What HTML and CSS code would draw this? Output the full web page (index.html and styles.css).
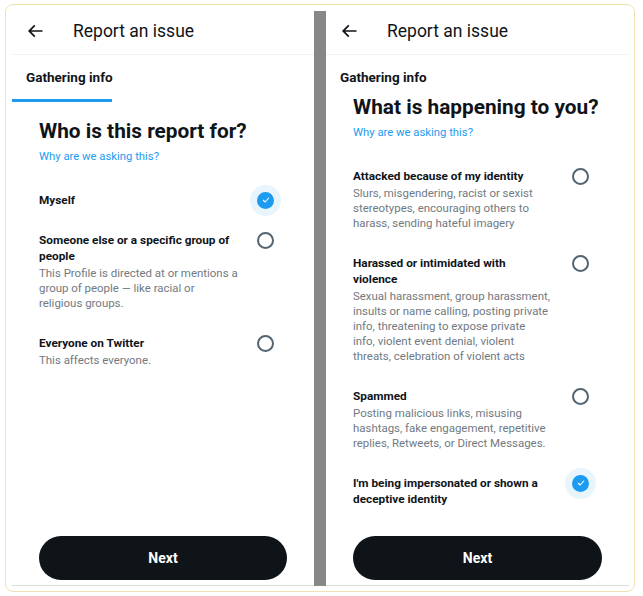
FILE: index.html
```html
<!DOCTYPE html>
<html lang="en">
<head>
  <meta charset="UTF-8" />
  <meta name="viewport" content="width=device-width, initial-scale=1.0" />
  <title>Report an issue</title>
  <link rel="stylesheet" href="styles.css">
</head>
<body>
  <div class="frame">
    <div class="screen">

      <!-- step 1: who is it for -->
      <section class="panel">
        <header class="topbar">
          <svg class="back" viewBox="0 0 24 24"><path d="M7.414 13l5.043 5.04-1.414 1.42L3.586 12l7.457-7.46 1.414 1.42L7.414 11H21v2H7.414z"/></svg>
          <span class="topbar-title">Report an issue</span>
        </header>
        <div class="tab tab-active">Gathering info</div>

        <div class="content">
          <h1 class="heading">Who is this report for?</h1>
          <a class="why" href="#">Why are we asking this?</a>

          <ul class="options">
            <li class="option">
              <div class="option-text">
                <div class="option-title">Myself</div>
              </div>
              <span class="mark"><span class="check"><svg viewBox="0 0 24 24"><path d="M6.5 12.5l3.7 3.5 7.3-8"/></svg></span></span>
            </li>
            <li class="option">
              <div class="option-text">
                <div class="option-title">Someone else or a specific group of people</div>
                <div class="option-desc">This Profile is directed at or mentions a group of people — like racial or religious groups.</div>
              </div>
              <span class="mark"><span class="radio"></span></span>
            </li>
            <li class="option">
              <div class="option-text">
                <div class="option-title">Everyone on Twitter</div>
                <div class="option-desc">This affects everyone.</div>
              </div>
              <span class="mark"><span class="radio"></span></span>
            </li>
          </ul>
        </div>

        <div class="footer">
          <button class="next">Next</button>
        </div>
      </section>

      <div class="divider"></div>

      <!-- step 2: what is happening -->
      <section class="panel panel-right">
        <header class="topbar">
          <svg class="back" viewBox="0 0 24 24"><path d="M7.414 13l5.043 5.04-1.414 1.42L3.586 12l7.457-7.46 1.414 1.42L7.414 11H21v2H7.414z"/></svg>
          <span class="topbar-title">Report an issue</span>
        </header>
        <div class="tab">Gathering info</div>

        <div class="content">
          <h1 class="heading heading-tight">What is happening to you?</h1>
          <a class="why" href="#">Why are we asking this?</a>

          <ul class="options">
            <li class="option">
              <div class="option-text">
                <div class="option-title">Attacked because of my identity</div>
                <div class="option-desc">Slurs, misgendering, racist or sexist stereotypes, encouraging others to harass, sending hateful imagery</div>
              </div>
              <span class="mark"><span class="radio"></span></span>
            </li>
            <li class="option">
              <div class="option-text">
                <div class="option-title">Harassed or intimidated with<br>violence</div>
                <div class="option-desc">Sexual harassment, group harassment, insults or name calling, posting private info, threatening to expose private<br>info, violent event denial, violent<br>threats, celebration of violent acts</div>
              </div>
              <span class="mark"><span class="radio"></span></span>
            </li>
            <li class="option">
              <div class="option-text">
                <div class="option-title">Spammed</div>
                <div class="option-desc">Posting malicious links, misusing hashtags, fake engagement, repetitive replies, Retweets, or Direct Messages.</div>
              </div>
              <span class="mark"><span class="radio"></span></span>
            </li>
            <li class="option">
              <div class="option-text">
                <div class="option-title">I'm being impersonated or shown a deceptive identity</div>
              </div>
              <span class="mark"><span class="check"><svg viewBox="0 0 24 24"><path d="M6.5 12.5l3.7 3.5 7.3-8"/></svg></span></span>
            </li>
          </ul>
        </div>

        <div class="footer">
          <button class="next">Next</button>
        </div>
      </section>

    </div>
  </div>
</body>
</html>
```

FILE: styles.css
```css
* { box-sizing: border-box; }
body { margin: 0; background: #fff; color: #0f1419; font-family: Roboto, "Noto Sans", sans-serif; }

.frame { margin: 4px 0 0 5px; width: 630px; height: 588px; padding: 6px 5px 5px 6px; border: 1px solid #f1e1b1; border-radius: 8px; }
.screen { display: flex; height: 100%; }
.divider { width: 12px; background: #878787; }

.panel { width: 302px; display: flex; flex-direction: column; border-bottom: 1px solid #dcdcdc; }
.panel-right { flex: 1; }

.topbar { height: 44px; display: flex; align-items: center; padding: 0 0 3px 13px; border-bottom: 1px solid #eff3f4; }
.back { width: 20px; height: 20px; margin-right: 28px; fill: #0f1419; }
.topbar-title { font-size: 17.5px; }

.tab { padding: 14px 14px 0; font-size: 13.5px; font-weight: 700; line-height: 16px; white-space: nowrap; }
.tab-active { width: 100px; padding-bottom: 14px; border-bottom: 3px solid #1d9bf0; }

.content { padding: 0 27px; }
.heading { margin: 17px 0 6px; font-size: 20.8px; line-height: 24px; font-weight: 700; }
.heading-tight { margin-top: 10px; }
.why { display: block; font-size: 11.3px; line-height: 16px; color: #1d9bf0; text-decoration: none; }

.options { list-style: none; margin: 27px 0 0; padding: 0; }
.option { display: flex; align-items: flex-start; padding-right: 6px; margin-bottom: 24px; }
.option-text { flex: 1; margin-right: 10px; }
.option-title { font-size: 11.8px; font-weight: 700; line-height: 16px; }
.option-desc { margin-top: 2px; font-size: 11.45px; line-height: 15px; color: #717a82; }

.mark { width: 31px; height: 16px; display: flex; align-items: center; justify-content: center; flex-shrink: 0; }
.radio { width: 17px; height: 17px; border: 2px solid #536471; border-radius: 50%; }
.check { width: 17px; height: 17px; border-radius: 50%; background: #1d9bf0; box-shadow: 0 0 0 7px #e8f5fd; display: flex; align-items: center; justify-content: center; }
.check svg { width: 12px; height: 12px; fill: none; stroke: #fff; stroke-width: 2.2; stroke-linecap: round; stroke-linejoin: round; }

.footer { margin-top: auto; padding: 0 27px 5px; }
.next { width: 100%; height: 44px; border: none; border-radius: 22px; background: #0f1419; color: #fff; font-family: Roboto, "Noto Sans", sans-serif; font-size: 14px; font-weight: 700; }
```
